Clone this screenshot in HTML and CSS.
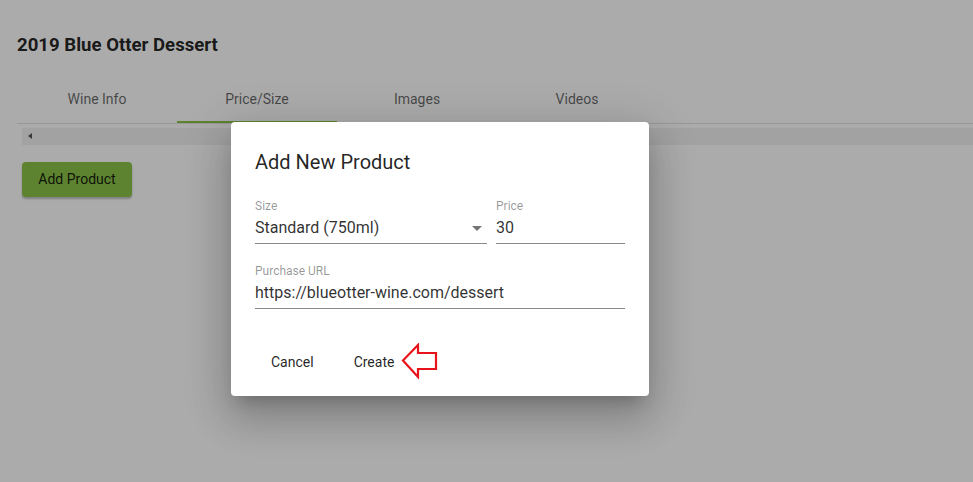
FILE: index.html
```html
<!DOCTYPE html>
<html>
<head>
<meta charset="utf-8">
<link rel="stylesheet" href="styles.css">
</head>
<body>
<div class="page">
  <h1 class="title">2019 Blue Otter Dessert</h1>
  <div class="tabs">
    <div class="tab">Wine Info</div>
    <div class="tab active">Price/Size</div>
    <div class="tab">Images</div>
    <div class="tab">Videos</div>
  </div>
  <div class="scroller"><span class="scroll-arrow"></span></div>
  <button class="add-btn">Add Product</button>
</div>
<div class="overlay"></div>
<div class="dialog">
  <h2 class="dlg-title">Add New Product</h2>
  <div class="row">
    <div class="field size">
      <label class="lbl">Size</label>
      <div class="val select">Standard (750ml)<span class="caret"></span></div>
    </div>
    <div class="field price">
      <label class="lbl">Price</label>
      <div class="val">30</div>
    </div>
  </div>
  <div class="row">
    <div class="field url">
      <label class="lbl">Purchase URL</label>
      <div class="val">https://blueotter-wine.com/dessert</div>
    </div>
  </div>
  <div class="actions">
    <button class="txt-btn">Cancel</button>
    <button class="txt-btn">Create</button>
  </div>
</div>
<svg class="arrow" width="38" height="37" viewBox="0 0 38 37">
  <path d="M2 17.5 L17 2 L17 10 L35 10 L35 26 L17 26 L17 34 Z" fill="none" stroke="#e8141c" stroke-width="2.2" stroke-linejoin="miter"/>
</svg>
</body>
</html>
```

FILE: styles.css
```css
* { box-sizing: border-box; }
html, body { margin: 0; height: 100%; }
body {
  background: #ffffff;
  font-family: Roboto, "Liberation Sans", Arial, sans-serif;
  overflow: hidden;
  position: relative;
}
.page { padding: 34px 0 0 17px; }
.title {
  margin: 0;
  font-size: 18.6px;
  font-weight: 700;
  line-height: 23px;
  color: rgba(0,0,0,0.87);
}
.tabs {
  display: flex;
  margin-top: 18px;
  height: 49px;
  border-bottom: 1px solid #e2e2e2;
}
.tab {
  width: 160px;
  display: flex;
  align-items: center;
  justify-content: center;
  font-size: 14px;
  color: rgba(0,0,0,0.6);
  padding-bottom: 1px;
}
.tab.active { border-bottom: 2px solid #8bc34a; padding-bottom: 0; padding-top: 2px; }
.scroller {
  margin: 4px 0 0 5px;
  height: 17px;
  background: #f2f2f2;
  position: relative;
}
.scroll-arrow {
  position: absolute;
  left: 6px; top: 5px;
  width: 0; height: 0;
  border-top: 3.5px solid transparent;
  border-bottom: 3.5px solid transparent;
  border-right: 4px solid #555;
}
.add-btn {
  margin: 17px 0 0 5px;
  width: 110px;
  height: 35px;
  padding: 0 0 2px;
  border: none;
  border-radius: 4px;
  background: #8bc34a;
  color: rgba(0,0,0,0.87);
  font-family: inherit;
  font-size: 14px;
  font-weight: 400;
  box-shadow: 0 2px 2px rgba(0,0,0,0.25);
}
.overlay {
  position: absolute;
  inset: 0;
  background: rgba(0,0,0,0.33);
}
.dialog {
  position: absolute;
  left: 231px; top: 122px;
  width: 418px; height: 274px;
  background: #fff;
  border-radius: 4px;
  padding: 24px 24px 16px;
  box-shadow: 0 11px 15px -7px rgba(0,0,0,0.2), 0 24px 38px 3px rgba(0,0,0,0.14), 0 9px 46px 8px rgba(0,0,0,0.12);
}
.dlg-title {
  margin: 0;
  font-size: 20px;
  font-weight: 400;
  line-height: 32px;
  color: rgba(0,0,0,0.87);
}
.row { display: flex; gap: 9px; }
.row:first-of-type { margin-top: 21px; }
.row + .row { margin-top: 20px; }
.field {
  display: flex;
  flex-direction: column;
  border-bottom: 1px solid #8a8a8a;
  padding-bottom: 5px;
}
.size { width: 232px; }
.price { width: 129px; }
.url { width: 370px; }
.lbl {
  font-size: 12px;
  line-height: 14px;
  color: rgba(0,0,0,0.42);
}
.val {
  margin-top: 5px;
  font-size: 16px;
  line-height: 20px;
  color: rgba(0,0,0,0.82);
  position: relative;
}
.caret {
  position: absolute;
  right: 5px; top: 8px;
  width: 0; height: 0;
  border-left: 5px solid transparent;
  border-right: 5px solid transparent;
  border-top: 5px solid #757575;
}
.actions {
  display: flex;
  gap: 8px;
  margin-top: 35px;
}
.txt-btn {
  height: 36px;
  padding: 0 16px;
  border: none;
  background: transparent;
  font-family: inherit;
  font-size: 14px;
  font-weight: 400;
  color: rgba(0,0,0,0.87);
}
.arrow {
  position: absolute;
  left: 401px; top: 343px;
}
```
